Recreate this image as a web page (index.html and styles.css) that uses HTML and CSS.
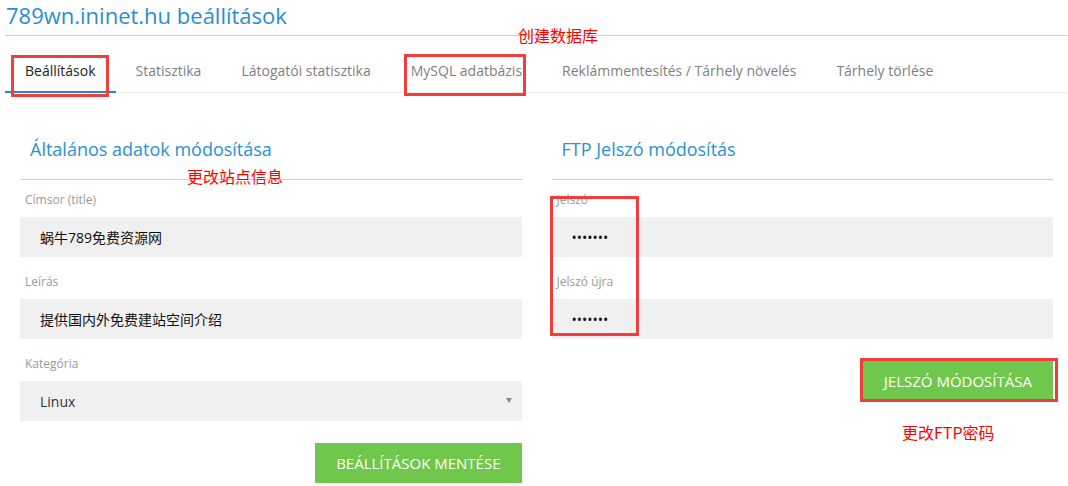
FILE: index.html
```html
<!DOCTYPE html>
<html>
    <head>
        <meta charset="utf-8">
        <title>789wn.ininet.hu beállítások</title>
        <link rel="stylesheet" href="styles.css">
    </head>
    <body>
        <div class="page">
            <h1 class="title">789wn.ininet.hu beállítások</h1>
            <ul class="tabs">
                <li class="active"><a href="#">Beállítások</a></li>
                <li><a href="#">Statisztika</a></li>
                <li><a href="#">Látogatói statisztika</a></li>
                <li><a href="#">MySQL adatbázis</a></li>
                <li><a href="#">Reklámmentesítés / Tárhely növelés</a></li>
                <li><a href="#">Tárhely törlése</a></li>
            </ul>
            <div class="row">
                <div class="col">
                    <h2 class="box-title">Általános adatok módosítása</h2>
                    <div class="group">
                        <label>Címsor (title)</label>
                        <input type="text" class="field" value="蜗牛789免费资源网">
                    </div>
                    <div class="group">
                        <label>Leírás</label>
                        <input type="text" class="field" value="提供国内外免费建站空间介绍">
                    </div>
                    <div class="group">
                        <label>Kategória</label>
                        <div class="select-wrap">
                            <select class="field">
                                <option>Linux</option>
                            </select>
                        </div>
                    </div>
                    <div class="actions">
                        <button class="btn">Beállítások mentése</button>
                    </div>
                </div>
                <div class="col">
                    <h2 class="box-title">FTP Jelszó módosítás</h2>
                    <div class="group">
                        <label>Jelszó</label>
                        <input type="password" class="field" value="1234567">
                    </div>
                    <div class="group">
                        <label>Jelszó újra</label>
                        <input type="password" class="field" value="1234567">
                    </div>
                    <div class="actions">
                        <button class="btn">Jelszó módosítása</button>
                    </div>
                </div>
            </div>

            <!-- 标注 -->
            <div class="mark mark-tab"></div>
            <div class="mark mark-mysql"></div>
            <div class="mark mark-pass"></div>
            <div class="mark mark-btn"></div>
            <span class="note note-db">创建数据库</span>
            <span class="note note-site">更改站点信息</span>
            <span class="note note-ftp">更改FTP密码</span>
        </div>
    </body>
</html>
```

FILE: styles.css
```css
*{
    margin:0;
    padding:0;
    box-sizing:border-box;
}
body{
    font-family:"Open Sans","Noto Sans CJK SC",sans-serif;
    background:#fff;
    color:#333;
    overflow:hidden;
}
.page{
    position:relative;
    padding-left:5px;
    width:1068px;
    height:486px;
}
.title{
    font-size:22px;
    font-weight:normal;
    line-height:30px;
    color:#2a8dd4;
    padding-left:1px;
    padding-bottom:5px;
    border-bottom:1px solid #cfcfcf;
}
.tabs{
    list-style:none;
    display:flex;
    margin-top:11px;
    border-bottom:1px solid #eee;
}
.tabs a{
    display:block;
    padding:14px 20px 10px;
    font-size:14px;
    line-height:20px;
    color:#7f7f7f;
    text-decoration:none;
    border-bottom:2px solid transparent;
    margin-bottom:-1px;
}
.tabs .active a{
    color:#222;
    border-bottom-color:#1a8ad4;
}
.row{
    display:flex;
}
.col{
    width:50%;
    padding:0 15px;
}
.box-title{
    margin-top:43px;
    padding:0 10px 17px;
    font-size:18px;
    font-weight:normal;
    line-height:26px;
    color:#2a90d8;
    border-bottom:1px solid #cfcfcf;
}
.group{
    margin-top:10px;
    margin-bottom:15px;
}
.group + .group{
    margin-top:0;
}
.group label{
    display:block;
    padding-left:5px;
    font-size:12px;
    line-height:20px;
    color:#9a9a9a;
    margin-bottom:7px;
}
.field{
    display:block;
    width:100%;
    height:40px;
    border:0;
    outline:0;
    background:#f0f0f0;
    padding:0 20px;
    font-family:"Open Sans","Noto Sans CJK SC",sans-serif;
    font-size:14px;
    color:#111;
    border-radius:0;
}
select.field{
    -webkit-appearance:none;
    appearance:none;
    color:#333;
}
.select-wrap{
    position:relative;
}
.select-wrap:after{
    content:"";
    position:absolute;
    right:10px;
    top:17px;
    border-left:3px solid transparent;
    border-right:3px solid transparent;
    border-top:5px solid #888;
}
.actions{
    display:flex;
    justify-content:flex-end;
    padding-top:7px;
}
.btn{
    height:40px;
    padding:0 21px;
    border:0;
    background:#6fc74b;
    color:#fff;
    font-family:"Open Sans",sans-serif;
    font-size:15px;
    text-transform:uppercase;
    cursor:pointer;
}
.mark{
    position:absolute;
    border:3px solid #f33d3d;
}
.mark-tab{
    left:11px;
    top:55px;
    width:98px;
    height:42px;
}
.mark-mysql{
    left:404px;
    top:54px;
    width:122px;
    height:42px;
}
.mark-pass{
    left:550px;
    top:196px;
    width:89px;
    height:140px;
}
.mark-btn{
    left:860px;
    top:358px;
    width:198px;
    height:44px;
}
.note{
    position:absolute;
    font-family:"Noto Sans CJK SC",sans-serif;
    font-size:16px;
    line-height:16px;
    color:#f00;
}
.note-db{
    left:518px;
    top:27px;
}
.note-site{
    left:187px;
    top:168px;
}
.note-ftp{
    left:902px;
    top:424px;
}
```
